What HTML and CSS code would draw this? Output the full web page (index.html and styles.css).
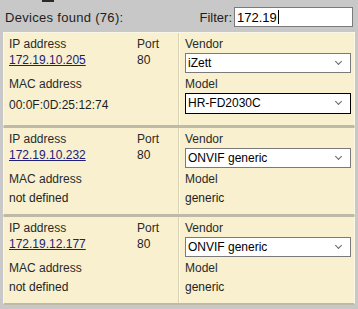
FILE: index.html
```html
<!DOCTYPE html>
<html lang="en">
<head>
    <meta charset="UTF-8">
    <title>Devices</title>
    <link rel="stylesheet" href="styles.css">
</head>
<body>
    <div class="grip"></div>
    <div class="topbar">
        <span class="found">Devices found (76):</span>
        <label class="filter">Filter: <span class="filter-input">172.19<span class="caret"></span></span></label>
    </div>
    <div class="list">
        <div class="card first">
            <div class="left">
                <div class="row">
                    <div class="ipcol">
                        <div class="label">IP address</div>
                        <a class="link" href="#">172.19.10.205</a>
                    </div>
                    <div class="portcol">
                        <div class="label">Port</div>
                        <div class="value">80</div>
                    </div>
                </div>
                <div class="label mac">MAC address</div>
                <div class="value macval">00:0F:0D:25:12:74</div>
            </div>
            <div class="right">
                <div class="label">Vendor</div>
                <div class="select">iZett<span class="chev"></span></div>
                <div class="label model">Model</div>
                <div class="select focused">HR-FD2030C<span class="chev"></span></div>
            </div>
        </div>
        <div class="card">
            <div class="left">
                <div class="row">
                    <div class="ipcol">
                        <div class="label">IP address</div>
                        <a class="link" href="#">172.19.10.232</a>
                    </div>
                    <div class="portcol">
                        <div class="label">Port</div>
                        <div class="value">80</div>
                    </div>
                </div>
                <div class="label mac">MAC address</div>
                <div class="value macval">not defined</div>
            </div>
            <div class="right">
                <div class="label">Vendor</div>
                <div class="select">ONVIF generic<span class="chev"></span></div>
                <div class="label model">Model</div>
                <div class="value macval">generic</div>
            </div>
        </div>
        <div class="card">
            <div class="left">
                <div class="row">
                    <div class="ipcol">
                        <div class="label">IP address</div>
                        <a class="link" href="#">172.19.12.177</a>
                    </div>
                    <div class="portcol">
                        <div class="label">Port</div>
                        <div class="value">80</div>
                    </div>
                </div>
                <div class="label mac">MAC address</div>
                <div class="value macval">not defined</div>
            </div>
            <div class="right">
                <div class="label">Vendor</div>
                <div class="select">ONVIF generic<span class="chev"></span></div>
                <div class="label model">Model</div>
                <div class="value macval">generic</div>
            </div>
        </div>
    </div>
</body>
</html>
```
FILE: styles.css
```css
* {
    margin: 0;
    padding: 0;
    box-sizing: border-box;
}

body {
    background-color: #c8c8c8;
    font-family: 'Liberation Sans', Arial, sans-serif;
    font-size: 12px;
    color: #1e1e1e;
    width: 358px;
    height: 309px;
    overflow: hidden;
    position: relative;
}

.grip {
    position: absolute;
    left: 42px;
    top: 0;
    width: 12px;
    height: 2px;
    background-color: #2a2a2a;
}

.topbar {
    height: 32px;
    display: flex;
    align-items: center;
    justify-content: space-between;
    padding: 2px 5px 0 5px;
}

.found {
    font-size: 13px;
    letter-spacing: 0.3px;
}

.filter {
    font-size: 13px;
    display: flex;
    align-items: center;
    gap: 2px;
}

.filter-input {
    display: inline-flex;
    align-items: center;
    width: 119px;
    height: 20px;
    background-color: #fff;
    border: 1px solid #7a7a7a;
    padding-left: 2px;
    color: #000;
}

.caret {
    display: inline-block;
    width: 1px;
    height: 14px;
    background-color: #000;
    margin-left: 1px;
}

.list {
    margin: 0 3px;
    display: flex;
    flex-direction: column;
}

.card {
    display: flex;
    background-color: #f8f0cf;
    border: 1px solid #fbf7e6;
    border-bottom: 2px solid #bfb9a8;
    height: 89px;
}

.card.first {
    height: 95px;
}

.card + .card {
    border-top: 1px solid #bfb9a8;
}

.left {
    width: 175px;
    border-right: 1px solid #d9d2b4;
    padding: 3px 0 0 5px;
}

.right {
    flex: 1;
    padding: 3px 0 0 5px;
    border-left: 1px solid #fffbea;
}

.row {
    display: flex;
}

.ipcol {
    width: 128px;
}

.label {
    line-height: 16px;
    color: #2a2a2a;
}

.value {
    line-height: 16px;
    color: #1e1e1e;
}

.link {
    display: block;
    line-height: 16px;
    color: #20207a;
    text-decoration: underline;
}

.mac {
    margin-top: 8px;
}

.macval {
    margin-top: 3px;
}

.first .macval {
    margin-top: 5px;
}

.select {
    position: relative;
    width: 166px;
    height: 20px;
    background-color: #fff;
    border: 1px solid #7a7a7a;
    padding-left: 2px;
    line-height: 18px;
    color: #000;
    margin-top: 1px;
}

.select.focused {
    border-color: #000;
    height: 21px;
    line-height: 19px;
}

.model {
    margin-top: 3px;
}

.chev {
    position: absolute;
    right: 9px;
    top: 5px;
    width: 5px;
    height: 5px;
    border-right: 1px solid #666;
    border-bottom: 1px solid #666;
    transform: rotate(45deg);
}
```
